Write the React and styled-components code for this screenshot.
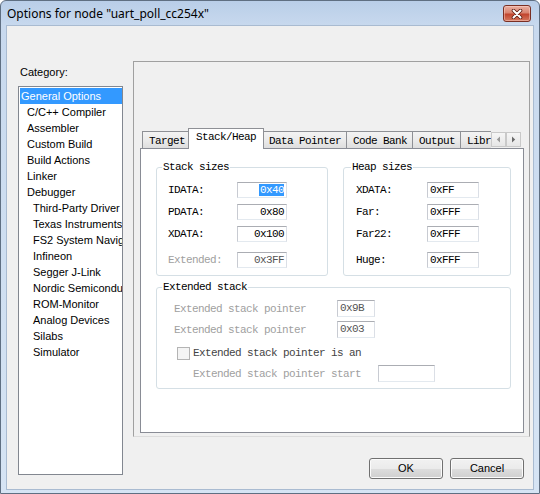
import React from 'react'
import styled, { createGlobalStyle } from 'styled-components'

const GlobalStyle = createGlobalStyle`
  html, body { margin: 0; padding: 0; background: #ffffff; }
  body { font-family: "Liberation Sans", Arial, sans-serif; }
  * { box-sizing: border-box; }
`

const MONO = `"Liberation Mono", "Courier New", monospace`

const categories = [
  { name: 'General Options', level: 0, selected: true },
  { name: 'C/C++ Compiler', level: 1 },
  { name: 'Assembler', level: 1 },
  { name: 'Custom Build', level: 1 },
  { name: 'Build Actions', level: 1 },
  { name: 'Linker', level: 1 },
  { name: 'Debugger', level: 1 },
  { name: 'Third-Party Driver', level: 2 },
  { name: 'Texas Instruments', level: 2 },
  { name: 'FS2 System Navigator', level: 2 },
  { name: 'Infineon', level: 2 },
  { name: 'Segger J-Link', level: 2 },
  { name: 'Nordic Semiconductor', level: 2 },
  { name: 'ROM-Monitor', level: 2 },
  { name: 'Analog Devices', level: 2 },
  { name: 'Silabs', level: 2 },
  { name: 'Simulator', level: 2 },
]

const tabs = ['Target', 'Stack/Heap', 'Data Pointer', 'Code Bank', 'Output', 'Library Configuration']

const stackRows = [
  { label: 'IDATA:', value: '0x40', top: 8, selected: true },
  { label: 'PDATA:', value: '0x80', top: 6 },
  { label: 'XDATA:', value: '0x100', top: 6 },
  { label: 'Extended:', value: '0x3FF', top: 10, disabled: true },
]

const heapRows = [
  { label: 'XDATA:', value: '0xFF', top: 8 },
  { label: 'Far:', value: '0xFFF', top: 6 },
  { label: 'Far22:', value: '0xFFF', top: 6 },
  { label: 'Huge:', value: '0xFFF', top: 10 },
]

const Window = styled.div`
  width: 540px;
  height: 494px;
  display: flex;
  flex-direction: column;
  border: 1px solid #5f6f82;
  border-radius: 6px 6px 0 0;
  background: linear-gradient(180deg, #b9cee8 0px, #c8d9ee 25px, #d6e4f4 100%);
  padding: 0 6px 4px 6px;
`

const TitleBar = styled.div`
  height: 25px;
  flex: none;
  display: flex;
  align-items: center;
`

const Title = styled.div`
  font-family: "Noto Sans", "Open Sans", sans-serif;
  font-size: 12px;
  color: #000;
  white-space: nowrap;
`

const CloseButton = styled.div`
  margin-left: auto;
  margin-right: 2px;
  align-self: flex-start;
  margin-top: 4px;
  width: 28px;
  height: 17px;
  border: 1px solid #7a2f23;
  border-radius: 3px;
  background: linear-gradient(180deg, #eab0a2 0%, #d98470 45%, #c2452e 55%, #d4785f 100%);
  box-shadow: inset 0 0 0 1px rgba(255, 220, 210, 0.45);
  display: flex;
  align-items: center;
  justify-content: center;
`

const Client = styled.div`
  flex: 1;
  display: flex;
  gap: 10px;
  padding: 0 3px 0 11px;
  background: #f0f0f0;
  box-shadow: 0 0 0 1px #a9bbd1;
`

const LeftCol = styled.div`
  width: 105px;
  flex: none;
  display: flex;
  flex-direction: column;
  padding-top: 40px;
`

const CategoryLabel = styled.div`
  font-size: 11px;
  line-height: 13px;
  margin: 0 0 7px 2px;
  color: #000;
`

const ListBox = styled.div`
  height: 389px;
  border: 1px solid #828790;
  background: #fff;
  padding: 1px 0 0 1px;
  overflow: hidden;
`

const ListItem = styled.div`
  height: 16px;
  line-height: 16px;
  font-size: 11px;
  white-space: nowrap;
  padding-left: ${p => 1 + p.$level * 6}px;
  background: ${p => (p.$selected ? '#3399ff' : 'transparent')};
  color: ${p => (p.$selected ? '#fff' : '#000')};
`

const RightCol = styled.div`
  flex: 1;
  display: flex;
  flex-direction: column;
  padding-top: 35px;
`

const Panel = styled.div`
  height: 376px;
  border: 1px solid #a0a0a0;
  border-bottom-color: #dcdcdc;
  padding: 66px 5px 0 6px;
  display: flex;
  flex-direction: column;
`

const TabStrip = styled.div`
  height: 21px;
  display: flex;
  align-items: flex-end;
`

const TabsClip = styled.div`
  width: 351px;
  height: 21px;
  padding-left: 2px;
  display: flex;
  align-items: flex-end;
  overflow: hidden;
`

const Tab = styled.div`
  flex: none;
  position: relative;
  font-family: ${MONO};
  font-size: 11px;
  letter-spacing: -0.6px;
  color: #000;
  white-space: nowrap;
  border: 1px solid #8e9095;
  border-bottom: 0;
  ${p =>
    p.$active
      ? `
    height: 21px;
    line-height: 17px;
    padding: 0 7px;
    margin: 0 -2px 0 -2px;
    background: #fff;
    z-index: 1;
  `
      : `
    height: 17px;
    line-height: 17px;
    padding: 2px 5px 0 6px;
    line-height: 15px;
    margin: 0 -1px 1px 0;
    background: linear-gradient(180deg, #f3f3f3 0%, #ebebeb 50%, #dedede 100%);
  `}
`

const Arrows = styled.div`
  display: flex;
  margin: 0 1px 2px 0;
`

const ArrowButton = styled.div`
  width: 15px;
  height: 15px;
  border: 1px solid #c9c9c9;
  background: linear-gradient(180deg, #f6f6f6, #e6e6e6);
  display: flex;
  align-items: center;
  justify-content: center;
`

const TabPage = styled.div`
  height: 285px;
  margin-top: -1px;
  border: 1px solid #898c95;
  background: #fff;
  padding: 11px 12px 0 15px;
`

const PageGrid = styled.div`
  display: grid;
  grid-template-columns: 172px 168px;
  column-gap: 15px;
  row-gap: 4px;
`

const Group = styled.fieldset`
  margin: 0;
  min-width: 0;
  border: 1px solid #d5dfe5;
  border-radius: 3px;
  padding: 0 0 ${p => p.$bottom}px ${p => p.$pad}px;
  grid-column: ${p => (p.$wide ? '1 / -1' : 'auto')};
`

const Legend = styled.legend`
  padding: 0 1px;
  font-family: ${MONO};
  font-size: 11px;
  letter-spacing: -0.6px;
  line-height: 14px;
  color: #000;
`

const Row = styled.div`
  display: grid;
  grid-template-columns: ${p => p.$labelW}px ${p => p.$boxW}px;
  align-items: center;
  margin-top: ${p => p.$top}px;
  padding-left: ${p => p.$indent}px;
`

const Label = styled.div`
  font-family: ${MONO};
  font-size: 11px;
  letter-spacing: -0.6px;
  line-height: 14px;
  white-space: nowrap;
  color: ${p => (p.$disabled ? '#a0a0a0' : '#000')};
`

const Field = styled.div`
  height: ${p => p.$h || 16}px;
  width: ${p => (p.$w ? `${p.$w}px` : 'auto')};
  border: 1px solid;
  border-color: #abadb3 #dbdfe6 #e3e9ef #c8cbd2;
  background: #fff;
  font-family: ${MONO};
  font-size: 11px;
  letter-spacing: -0.6px;
  line-height: 14px;
  padding: 0 2px;
  text-align: ${p => p.$align || 'left'};
  color: ${p => p.$color || '#000'};
  white-space: nowrap;
  overflow: hidden;
`

const Selection = styled.span`
  background: #3399ff;
  color: #fff;
  padding: 0 0 0 1px;
`

const ExtRow = styled.div`
  display: flex;
  align-items: center;
  margin-top: ${p => p.$top}px;
  padding-left: ${p => p.$indent}px;
`

const ExtLabel = styled(Label)`
  width: ${p => p.$w}px;
  flex: none;
  color: ${p => p.$color};
`

const CheckBox = styled.div`
  width: 13px;
  height: 13px;
  flex: none;
  margin-right: 3px;
  border: 1px solid #b4b4b4;
  background: #f4f4f4;
`

const ButtonRow = styled.div`
  display: flex;
  justify-content: flex-end;
  gap: 7px;
  margin-top: 21px;
  padding-right: 6px;
`

const Button = styled.div`
  width: 74px;
  height: 21px;
  border: 1px solid #707070;
  border-radius: 3px;
  background: linear-gradient(180deg, #f2f2f2 0%, #ebebeb 50%, #dddddd 51%, #cfcfcf 100%);
  box-shadow: inset 0 0 0 1px #fbfbfb;
  font-size: 11px;
  line-height: 19px;
  text-align: center;
  color: #000;
`

function CloseIcon() {
  return (
    <svg width="12" height="10" viewBox="0 0 12 10">
      <path d="M2.5 1.5 L9.5 8.5 M9.5 1.5 L2.5 8.5" stroke="#5b1c12" strokeWidth="3.6" strokeLinecap="round" />
      <path d="M2.5 1.5 L9.5 8.5 M9.5 1.5 L2.5 8.5" stroke="#ffffff" strokeWidth="2" strokeLinecap="round" />
    </svg>
  )
}

function Arrow({ dir }) {
  return (
    <svg width="5" height="7" viewBox="0 0 5 7">
      {dir === 'left' ? (
        <path d="M4 0.5 L0.8 3.5 L4 6.5 Z" fill="#9a9a9a" />
      ) : (
        <path d="M1 0.5 L4.2 3.5 L1 6.5 Z" fill="#6a6a6a" />
      )}
    </svg>
  )
}

function SizeGroup({ title, rows, pad, indent, labelW, boxW, align }) {
  return (
    <Group $pad={pad} $bottom={7}>
      <Legend>{title}</Legend>
      {rows.map(r => (
        <Row key={r.label} $labelW={labelW} $boxW={boxW} $top={r.top} $indent={indent}>
          <Label $disabled={r.disabled}>{r.label}</Label>
          <Field $align={align} $color={r.disabled ? '#555' : '#000'}>
            {r.selected ? <Selection>{r.value}</Selection> : r.value}
          </Field>
        </Row>
      ))}
    </Group>
  )
}

export default function App() {
  return (
    <>
      <GlobalStyle />
      <Window>
        <TitleBar>
          <Title>Options for node "uart_poll_cc254x"</Title>
          <CloseButton>
            <CloseIcon />
          </CloseButton>
        </TitleBar>
        <Client>
          <LeftCol>
            <CategoryLabel>Category:</CategoryLabel>
            <ListBox>
              {categories.map(c => (
                <ListItem key={c.name} $level={c.level} $selected={c.selected}>
                  {c.name}
                </ListItem>
              ))}
            </ListBox>
          </LeftCol>
          <RightCol>
            <Panel>
              <TabStrip>
                <TabsClip>
                  {tabs.map(t => (
                    <Tab key={t} $active={t === 'Stack/Heap'}>
                      {t}
                    </Tab>
                  ))}
                </TabsClip>
                <Arrows>
                  <ArrowButton>
                    <Arrow dir="left" />
                  </ArrowButton>
                  <ArrowButton>
                    <Arrow dir="right" />
                  </ArrowButton>
                </Arrows>
              </TabStrip>
              <TabPage>
                <PageGrid>
                  <SizeGroup
                    title="Stack sizes"
                    rows={stackRows}
                    pad={5}
                    indent={6}
                    labelW={69}
                    boxW={50}
                    align="right"
                  />
                  <SizeGroup
                    title="Heap sizes"
                    rows={heapRows}
                    pad={7}
                    indent={5}
                    labelW={71}
                    boxW={52}
                    align="left"
                  />
                  <Group $wide $pad={5} $bottom={6}>
                    <Legend>Extended stack</Legend>
                    <ExtRow $top={6} $indent={12}>
                      <ExtLabel $w={163} $color="#a0a0a0">Extended stack pointer</ExtLabel>
                      <Field $w={38} $h={17} $color="#555">0x9B</Field>
                    </ExtRow>
                    <ExtRow $top={4} $indent={12}>
                      <ExtLabel $w={163} $color="#a0a0a0">Extended stack pointer</ExtLabel>
                      <Field $w={38} $h={17} $color="#555">0x03</Field>
                    </ExtRow>
                    <ExtRow $top={8} $indent={15}>
                      <CheckBox />
                      <ExtLabel $w={250} $color="#444">Extended stack pointer is an</ExtLabel>
                    </ExtRow>
                    <ExtRow $top={5} $indent={31}>
                      <ExtLabel $w={185} $color="#a0a0a0">Extended stack pointer start</ExtLabel>
                      <Field $w={57} $h={17} />
                    </ExtRow>
                  </Group>
                </PageGrid>
              </TabPage>
            </Panel>
            <ButtonRow>
              <Button>OK</Button>
              <Button>Cancel</Button>
            </ButtonRow>
          </RightCol>
        </Client>
      </Window>
    </>
  )
}
